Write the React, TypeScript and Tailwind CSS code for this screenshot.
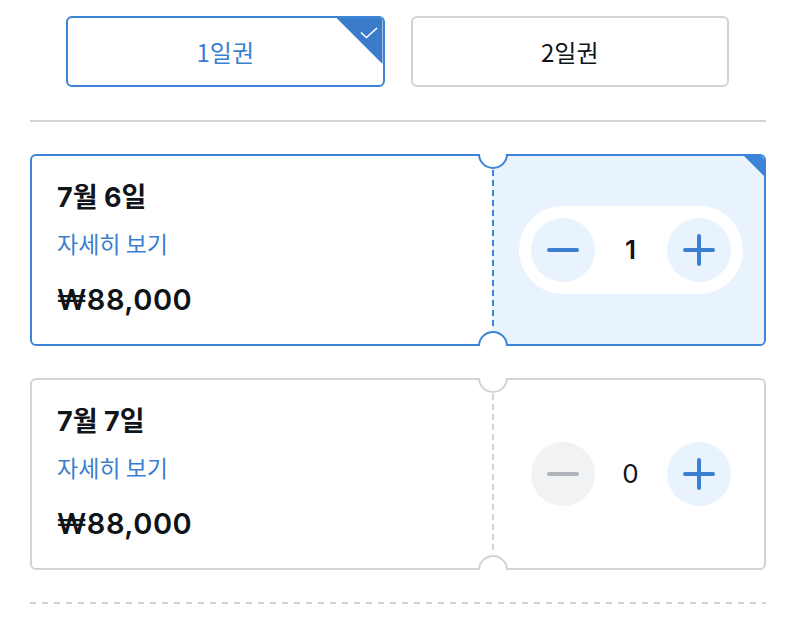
import { useState } from 'react';

const FONT = "font-['Inter','Noto_Sans_CJK_KR',sans-serif]";
const KR = "font-['Noto_Sans_CJK_KR','Inter',sans-serif]";

type Day = { id: string; label: string; price: string };

const DAYS: Day[] = [
  { id: 'd6', label: '7월 6일', price: '₩88,000' },
  { id: 'd7', label: '7월 7일', price: '₩88,000' },
];

function MinusIcon({ color }: { color: string }) {
  return (
    <svg width="32" height="32" viewBox="0 0 32 32" fill="none" aria-hidden>
      <path d="M2 16h28" stroke={color} strokeWidth="4" strokeLinecap="round" />
    </svg>
  );
}

function PlusIcon() {
  return (
    <svg width="32" height="32" viewBox="0 0 32 32" fill="none" aria-hidden>
      <path d="M2 16h28M16 2v28" stroke="#3a7fd0" strokeWidth="4" strokeLinecap="round" />
    </svg>
  );
}

function Notch({ side, active }: { side: 'top' | 'bottom'; active: boolean }) {
  const ring = active ? 'border-[#3b84d8]' : 'border-[#d0d4d9]';
  return (
    <div
      className={`absolute left-[446px] h-[16px] w-[30px] overflow-hidden ${
        side === 'top' ? 'top-[-2px]' : 'bottom-[-2px]'
      }`}
    >
      <div
        className={`h-[30px] w-[30px] rounded-full border-2 bg-white ${ring} ${
          side === 'top' ? '-mt-[15px]' : 'mt-px'
        }`}
      />
    </div>
  );
}

function DayCard({
  day,
  qty,
  onChange,
}: {
  day: Day;
  qty: number;
  onChange: (n: number) => void;
}) {
  const active = qty > 0;
  return (
    <div
      className={`relative flex h-[192px] rounded-md border-2 ${
        active ? 'border-[#3b84d8]' : 'border-[#d0d4d9]'
      }`}
    >
      <div className="flex flex-1 flex-col pl-[25px] pt-[26px]">
        <p className="text-[27px] font-bold leading-[32px] text-[#111418]">{day.label}</p>
        <button
          type="button"
          className={`${KR} mt-[14px] self-start text-[23px] leading-[30px] text-[#3a7fd0]`}
        >
          자세히 보기
        </button>
        <p className="mt-[24px] text-[29px] font-semibold leading-[36px] tracking-[0.5px] text-[#0f1419]">
          {day.price}
        </p>
      </div>

      <div
        className={`relative flex w-[272px] items-center justify-center pl-[5px] ${
          active ? 'rounded-r-[4px] bg-[#e9f3fe]' : ''
        }`}
      >
        <span
          aria-hidden
          className={`absolute bottom-[14px] left-0 top-[14px] w-[2px] ${
            active
              ? 'bg-[repeating-linear-gradient(to_bottom,#3b84d8_0_6px,transparent_6px_10px)]'
              : 'bg-[repeating-linear-gradient(to_bottom,#d0d4d9_0_6px,transparent_6px_10px)]'
          }`}
        />
        {active ? (
          <span
            aria-hidden
            className="absolute right-0 top-0 h-[20px] w-[20px] rounded-tr-[4px] bg-[#3b84d8] [clip-path:polygon(0_0,100%_0,100%_100%)]"
          />
        ) : null}
        <div
          className={`flex h-[88px] w-[224px] items-center justify-between rounded-full px-[12px] ${
            active ? 'bg-white' : ''
          }`}
        >
          <button
            type="button"
            onClick={() => onChange(Math.max(0, qty - 1))}
            className={`flex h-[64px] w-[64px] items-center justify-center rounded-full ${
              active ? 'bg-[#e9f3fe]' : 'bg-[#f1f2f3]'
            }`}
          >
            <MinusIcon color={active ? '#3a7fd0' : '#aeb4ba'} />
          </button>
          <span
            className={`text-[26px] leading-none text-[#0f1419] ${
              active ? 'font-semibold' : 'font-normal'
            }`}
          >
            {qty}
          </span>
          <button
            type="button"
            onClick={() => onChange(qty + 1)}
            className="flex h-[64px] w-[64px] items-center justify-center rounded-full bg-[#e9f3fe]"
          >
            <PlusIcon />
          </button>
        </div>
      </div>

      <Notch side="top" active={active} />
      <Notch side="bottom" active={active} />
    </div>
  );
}

export default function App() {
  const [pass, setPass] = useState(1);
  const [qty, setQty] = useState<Record<string, number>>({ d6: 1, d7: 0 });

  return (
    <div className={`${FONT} h-[638px] w-[796px] bg-white pt-4`}>
      <div className="grid grid-cols-2 gap-[26px] pl-[66px] pr-[67px]">
        {[1, 2].map((n) => {
          const on = pass === n;
          return (
            <button
              key={n}
              type="button"
              onClick={() => setPass(n)}
              className={`${KR} relative h-[71px] overflow-hidden rounded-md border-2 text-[24px] ${
                on ? 'border-[#3b84d8] text-[#3a7fd0]' : 'border-[#d0d4d9] text-[#111418]'
              }`}
            >
              {n}일권
              {on ? (
                <span
                  aria-hidden
                  className="absolute right-0 top-0 h-[46px] w-[46px] bg-[#3a7cc9] [clip-path:polygon(0_0,100%_0,100%_100%)]"
                >
                  <svg
                    className="absolute right-[4px] top-[8px]"
                    width="20"
                    height="14"
                    viewBox="0 0 20 14"
                    fill="none"
                  >
                    <path d="M2 6.5l5.5 5L18 2" stroke="white" strokeWidth="1.6" />
                  </svg>
                </span>
              ) : null}
            </button>
          );
        })}
      </div>

      <div className="mx-[30px] mt-[33px] h-[2px] bg-[#d0d4d9]" />

      <div className="mx-[30px] mt-[32px] flex flex-col gap-[32px]">
        {DAYS.map((d) => (
          <DayCard
            key={d.id}
            day={d}
            qty={qty[d.id]}
            onChange={(n) => setQty((q) => ({ ...q, [d.id]: n }))}
          />
        ))}
      </div>

      <div className="mx-[30px] mt-[32px] h-[2px] bg-[repeating-linear-gradient(to_right,#d0d4d9_0_6px,transparent_6px_12px)]" />
    </div>
  );
}
